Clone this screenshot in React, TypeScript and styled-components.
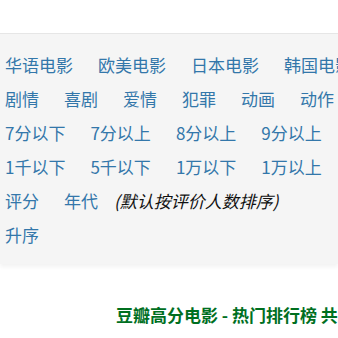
import React from 'react';
import styled, {createGlobalStyle} from 'styled-components';

const GlobalStyle = createGlobalStyle`
    html, body {
        margin: 0;
        padding: 0;
        background: #fff;
        overflow: hidden;
    }
    body {
        font-family: "Noto Sans CJK SC", "Noto Sans", sans-serif;
    }
`

type RowType = {
    items: string[]
    note?: string
}

const rows: RowType[] = [
    {items: ['华语电影', '欧美电影', '日本电影', '韩国电影']},
    {items: ['剧情', '喜剧', '爱情', '犯罪', '动画', '动作']},
    {items: ['7分以下', '7分以上', '8分以上', '9分以上']},
    {items: ['1千以下', '5千以下', '1万以下', '1万以上']},
    {items: ['评分', '年代'], note: '(默认按评价人数排序)'},
    {items: ['升序']},
]

const Page = styled.div`
    width: 338px;
    height: 338px;
    overflow: hidden;
`

const TopBar = styled.div`
    height: 33px;
    background: #fff;
`

const FilterPanel = styled.div`
    background: #f5f5f5;
    border-top: 1px solid #e6e6e6;
    padding: 13px 0 13px 5px;
    box-shadow: 0 3px 4px rgba(0, 0, 0, 0.05);
`

const Row = styled.div`
    display: flex;
    white-space: nowrap;
    height: 34px;
    align-items: center;
    font-size: 17px;
`

const Tag = styled.a`
    color: #3377aa;
    text-decoration: none;
    margin-right: 25px;
    flex-shrink: 0;
`

const Note = styled.span`
    color: #111;
    font-style: italic;
    margin-left: -9px;
`

const Title = styled.h2`
    margin: 39px 0 0;
    padding-left: 116px;
    white-space: nowrap;
    font-size: 17px;
    line-height: 24px;
    font-weight: bold;
    color: #006f1f;
`

export default function App() {
    return (
        <Page>
            <GlobalStyle/>
            <TopBar/>
            <FilterPanel>
                {rows.map((row, i) => (
                    <Row key={i}>
                        {row.items.map(item => <Tag key={item} href="#">{item}</Tag>)}
                        {row.note && <Note>{row.note}</Note>}
                    </Row>
                ))}
            </FilterPanel>
            <Title>豆瓣高分电影 - 热门排行榜 共250部</Title>
        </Page>
    );
}
